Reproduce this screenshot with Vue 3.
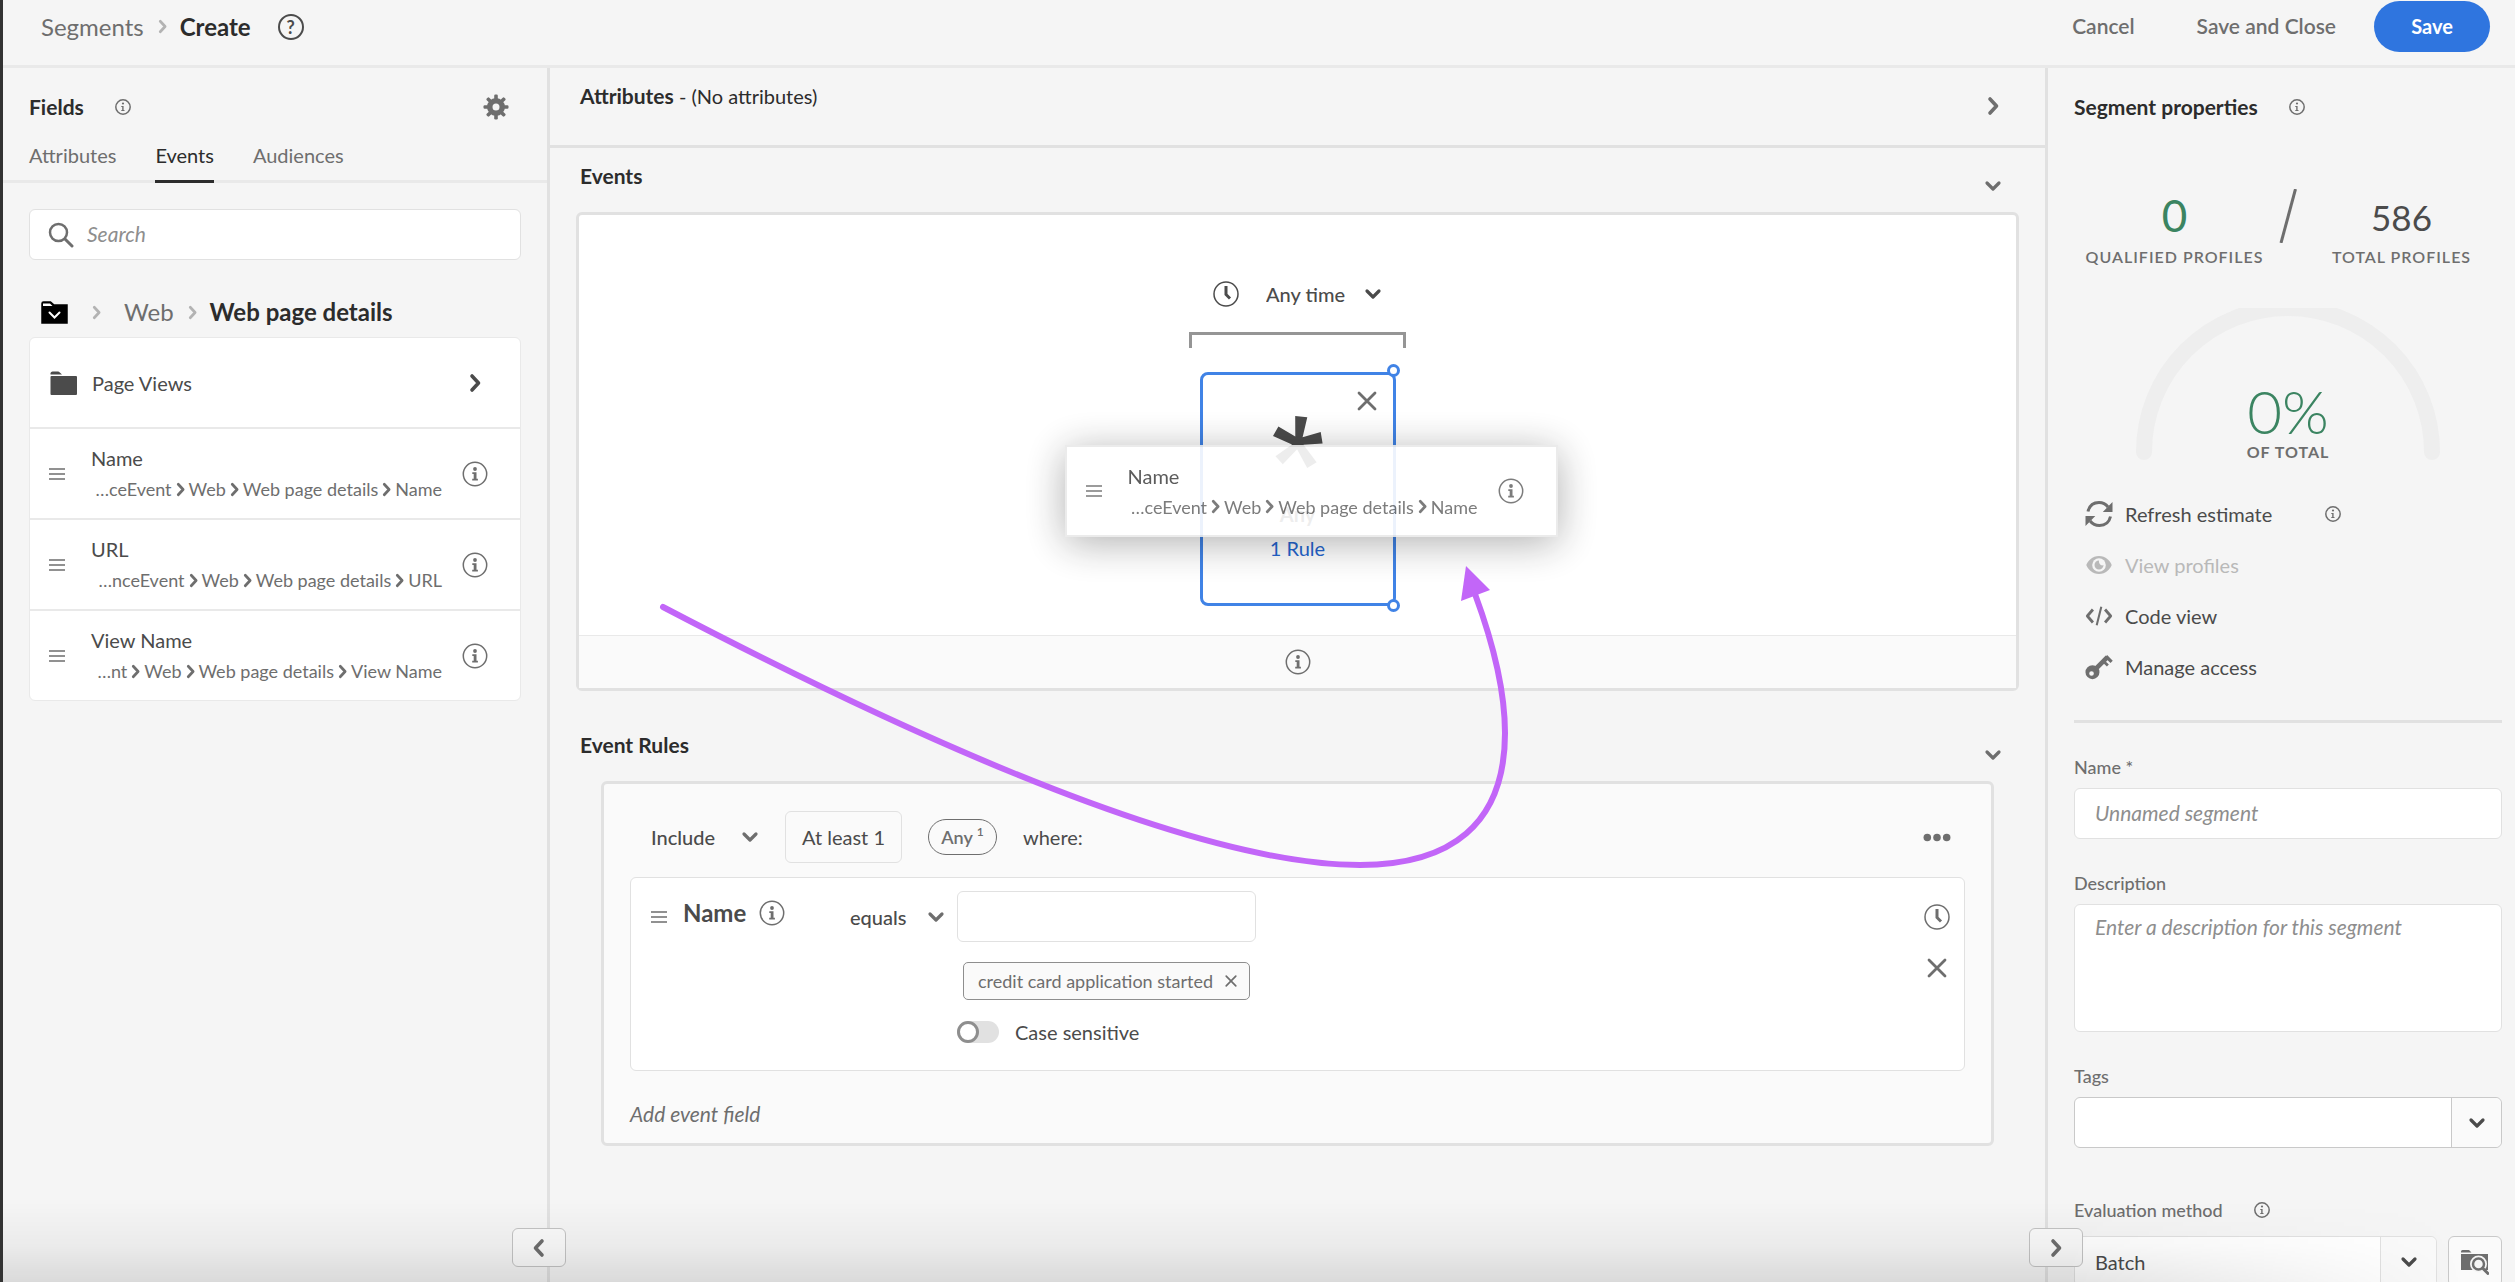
<script setup>
import { ref } from 'vue'

const tabs = ['Attributes', 'Events', 'Audiences']
const activeTab = ref('Events')

const fields = [
  { name: 'Name', path: ['…ceEvent', 'Web', 'Web page details', 'Name'] },
  { name: 'URL', path: ['…nceEvent', 'Web', 'Web page details', 'URL'] },
  { name: 'View Name', path: ['…nt', 'Web', 'Web page details', 'View Name'] },
]
const dragged = fields[0]

const actions = [
  { icon: 'refresh', label: 'Refresh estimate', info: true },
  { icon: 'eye', label: 'View profiles', disabled: true },
  { icon: 'code', label: 'Code view' },
  { icon: 'key', label: 'Manage access' },
]

const caseSensitive = ref(false)
</script>

<template>
  <div class="app">
    <svg class="sprite" aria-hidden="true">
      <symbol id="chev-right" viewBox="0 0 12 20">
        <path d="M3 3l6.500 7L3 17" fill="none" stroke="currentColor" stroke-width="3.600" stroke-linecap="round" stroke-linejoin="round" />
      </symbol>
      <symbol id="chev-left" viewBox="0 0 12 20">
        <path d="M9 3l-6.500 7L9 17" fill="none" stroke="currentColor" stroke-width="3.600" stroke-linecap="round" stroke-linejoin="round" />
      </symbol>
      <symbol id="chev-down" viewBox="0 0 18 12">
        <path d="M3 3l6 6 6-6" fill="none" stroke="currentColor" stroke-width="3.200" stroke-linecap="round" stroke-linejoin="round" />
      </symbol>
      <symbol id="info" viewBox="0 0 26 26">
        <circle cx="13" cy="13" r="11.700" fill="none" stroke="currentColor" stroke-width="1.500" />
        <circle cx="13" cy="8" r="1.900" fill="currentColor" />
        <path d="M10.300 11.300h4.200v6.500h1.400v1.700h-5.700v-1.700h1.500v-4.800h-1.400z" fill="currentColor" />
      </symbol>
      <symbol id="info-small" viewBox="0 0 18 18">
        <circle cx="9" cy="9" r="7.200" fill="none" stroke="currentColor" stroke-width="1.500" />
        <circle cx="9" cy="5.500" r="1.100" fill="currentColor" />
        <path d="M7.300 7.900h2.300v4h.9v1H7.300v-1h.9V8.900h-.9z" fill="currentColor" />
      </symbol>
      <symbol id="gear" viewBox="0 0 26 26">
        <g fill="currentColor">
          <path fill-rule="evenodd" d="M13 4a9 9 0 100 18 9 9 0 000-18zm0 5.500a3.500 3.500 0 110 7 3.500 3.500 0 010-7z" />
          <rect v-for="n in 8" :key="n" x="11.200" y="0.500" width="3.600" height="5" rx="1.200" :transform="`rotate(${n * 45} 13 13)`" />
        </g>
      </symbol>
      <symbol id="search" viewBox="0 0 26 26">
        <circle cx="10.500" cy="10.500" r="8.500" fill="none" stroke="currentColor" stroke-width="2.500" />
        <path d="M17 17l7 7" stroke="currentColor" stroke-width="3" stroke-linecap="round" />
      </symbol>
      <symbol id="folder-nav" viewBox="0 0 27 23">
        <path d="M1 22V2.500Q1 1 2.500 1h7L13 4h13v18z" fill="#000" stroke="#000" stroke-width="1.500" />
        <path d="M2 5V2.500h7L11.500 5z" fill="#fff" />
        <path d="M8.500 11.500l5 5 5-5" fill="none" stroke="#fff" stroke-width="2" stroke-linecap="round" />
      </symbol>
      <symbol id="folder" viewBox="0 0 27 24">
        <path d="M.500 3.500V2Q1 .5 2.500.5H8q1 0 1.800.9L12 3.500zM1.500 5h24.500q1 0 1 1v17q0 1-1 1H1.500q-1 0-1-1V6q0-1 1-1z" fill="currentColor" />
      </symbol>
      <symbol id="handle" viewBox="0 0 16 14">
        <path d="M0 2h16M0 7h16M0 12h16" stroke="currentColor" stroke-width="1.600" />
      </symbol>
      <symbol id="clock" viewBox="0 0 26 26">
        <circle cx="13" cy="13" r="12" fill="none" stroke="currentColor" stroke-width="1.500" />
        <path d="M13 5v8.500l4 4" fill="none" stroke="currentColor" stroke-width="3" />
      </symbol>
      <symbol id="cross" viewBox="0 0 20 20">
        <path d="M2 2l16 16M18 2L2 18" stroke="currentColor" stroke-width="2.800" stroke-linecap="round" />
      </symbol>
      <symbol id="asterisk" viewBox="0 0 50 52">
        <path d="M22.200 0L34.300 1.200 29.600 21.300 47.700 16 49.600 27.500 30.500 28.700 43.600 46.300 34.200 52 24.100 33.300 9.800 48.300 2.500 40.300 19 28.500 0 20 5.400 10.500 22.300 20.600z" fill="currentColor" />
      </symbol>
      <symbol id="dots" viewBox="0 0 26 8">
        <g fill="currentColor"><circle cx="4" cy="4" r="3.500" /><circle cx="13" cy="4" r="3.500" /><circle cx="22" cy="4" r="3.500" /></g>
      </symbol>
      <symbol id="refresh" viewBox="0 0 28 28">
        <path d="M3 11.500C4.500 5 9 2.500 14 2.500c4 0 7 1.800 9 4.500M25.500 16.500C24 23 19.500 25.500 14.500 25.500c-4 0-7.300-1.800-9.300-4.500" fill="none" stroke="currentColor" stroke-width="3" />
        <path d="M27.500 2v10H17.800zM.5 26V16h9.800z" fill="currentColor" />
      </symbol>
      <symbol id="eye" viewBox="0 0 28 28">
        <path d="M14 5C7.500 5 2.500 10 1.300 14c1.200 4 6.200 9 12.700 9s11.500-5 12.700-9C25.500 10 20.500 5 14 5z" fill="currentColor" />
        <circle cx="14" cy="14" r="6.800" fill="#f5f5f5" />
        <path d="M14 9.500a4.500 4.500 0 104.500 4.500c-2 1.300-5-.8-4.500-4.500z" fill="currentColor" />
      </symbol>
      <symbol id="code" viewBox="0 0 30 22">
        <path d="M8.500 4L2.500 11l6 7M21.500 4l6 7-6 7" fill="none" stroke="currentColor" stroke-width="3" stroke-linejoin="round" />
        <path d="M17.500 1L12.500 21" stroke="currentColor" stroke-width="2.200" />
      </symbol>
      <symbol id="key" viewBox="0 0 30 28">
        <path fill-rule="evenodd" d="M8 12a7.500 7.500 0 100 15 7.500 7.500 0 000-15zM7 18.500a2.500 2.500 0 110 5 2.500 2.500 0 010-5z" fill="currentColor" />
        <path d="M11 16.500L24 3.500" stroke="currentColor" stroke-width="5" />
        <path d="M22.500 2.500l6 6" stroke="currentColor" stroke-width="3.500" />
        <path d="M19.500 7.500l5 5" stroke="currentColor" stroke-width="3" />
      </symbol>
      <symbol id="folder-search" viewBox="0 0 28 26">
        <path d="M0 2.500Q0 1 1.500 1H8l2.500 2.500H0zM0 5h27v16H0z" fill="currentColor" />
        <circle cx="17.500" cy="15" r="8.500" fill="#f5f5f5" />
        <circle cx="17.500" cy="15" r="5.500" fill="#f5f5f5" stroke="currentColor" stroke-width="2.500" />
        <path d="M22 19.500l5 5" stroke="currentColor" stroke-width="3" stroke-linecap="round" />
      </symbol>
    </svg>

    <header class="topbar">
      <nav class="crumbs" aria-label="Breadcrumb">
        <a href="#segments">Segments</a>
        <svg class="crumb-sep"><use href="#chev-right" /></svg>
        <strong>Create</strong>
      </nav>
      <button class="help" aria-label="Help">?</button>
      <div class="top-actions">
        <button class="quiet">Cancel</button>
        <button class="quiet">Save and Close</button>
        <button class="save">Save</button>
      </div>
    </header>

    <div class="body">
      <aside class="fields">
        <div class="fields-head">
          <h2>Fields</h2>
          <svg class="i18"><use href="#info-small" /></svg>
          <button class="gear" aria-label="Settings"><svg class="i26"><use href="#gear" /></svg></button>
        </div>
        <nav class="tabs">
          <button v-for="t in tabs" :key="t" :class="{ active: t === activeTab }" @click="activeTab = t">{{ t }}</button>
        </nav>
        <label class="search">
          <svg class="i26"><use href="#search" /></svg>
          <input type="search" placeholder="Search" aria-label="Search" />
        </label>
        <nav class="folder-path" aria-label="Folder">
          <svg class="root"><use href="#folder-nav" /></svg>
          <svg class="crumb-sep first"><use href="#chev-right" /></svg>
          <a href="#web">Web</a>
          <svg class="crumb-sep"><use href="#chev-right" /></svg>
          <strong>Web page details</strong>
        </nav>
        <ul class="list">
          <li class="row folder-row">
            <svg class="folder"><use href="#folder" /></svg>
            <span class="row-name">Page Views</span>
            <svg class="chev-r"><use href="#chev-right" /></svg>
          </li>
          <li v-for="f in fields" :key="f.name" class="row">
            <svg class="handle"><use href="#handle" /></svg>
            <div class="row-text">
              <span class="row-name">{{ f.name }}</span>
              <span class="path">
                <template v-for="(p, i) in f.path" :key="i">
                  <svg v-if="i" class="path-sep"><use href="#chev-right" /></svg><span>{{ p }}</span>
                </template>
              </span>
            </div>
            <svg class="i26"><use href="#info" /></svg>
          </li>
        </ul>
        <button class="collapse left" aria-label="Collapse fields"><svg class="chev-r"><use href="#chev-left" /></svg></button>
      </aside>

      <main class="canvas">
        <section class="attributes">
          <div class="head">
            <h2>Attributes <span>- (No attributes)</span></h2>
            <button class="toggle" aria-label="Expand attributes"><svg class="chev-r"><use href="#chev-right" /></svg></button>
          </div>
        </section>

        <section class="events">
          <div class="head">
            <h2>Events</h2>
            <button class="toggle" aria-label="Collapse events"><svg class="chev-d"><use href="#chev-down" /></svg></button>
          </div>
          <div class="events-box">
            <div class="stage">
              <div class="timing">
                <svg class="i26"><use href="#clock" /></svg>
                <label class="pick">
                  <select aria-label="Time range"><option>Any time</option></select>
                  <svg class="chev-d"><use href="#chev-down" /></svg>
                </label>
              </div>
              <div class="bracket"></div>
              <article class="event-card">
                <i class="knob top"></i>
                <i class="knob bottom"></i>
                <button class="close" aria-label="Remove event"><svg class="i20"><use href="#cross" /></svg></button>
                <svg class="asterisk"><use href="#asterisk" /></svg>
                <strong>Any</strong>
                <a href="#rules">1 Rule</a>
              </article>
              <div class="row ghost">
                <svg class="handle"><use href="#handle" /></svg>
                <div class="row-text">
                  <span class="row-name">{{ dragged.name }}</span>
                  <span class="path">
                    <template v-for="(p, i) in dragged.path" :key="i">
                      <svg v-if="i" class="path-sep"><use href="#chev-right" /></svg><span>{{ p }}</span>
                    </template>
                  </span>
                </div>
                <svg class="i26"><use href="#info" /></svg>
              </div>
            </div>
            <div class="stage-foot"><svg class="i26"><use href="#info" /></svg></div>
          </div>
        </section>

        <section class="rules">
          <div class="head">
            <h2>Event Rules</h2>
            <button class="toggle" aria-label="Collapse rules"><svg class="chev-d"><use href="#chev-down" /></svg></button>
          </div>
          <div class="rules-box">
            <div class="rule-line">
              <label class="pick include">
                <select aria-label="Include or exclude"><option>Include</option></select>
                <svg class="chev-d"><use href="#chev-down" /></svg>
              </label>
              <button class="count">At least 1</button>
              <span class="pill">Any <sup>1</sup></span>
              <span>where:</span>
              <button class="more" aria-label="More"><svg class="dots"><use href="#dots" /></svg></button>
            </div>
            <div class="rule-card">
              <div class="rule-subject">
                <svg class="handle"><use href="#handle" /></svg>
                <div class="rule-name">
                  <strong>Name</strong>
                  <svg class="i26"><use href="#info" /></svg>
                </div>
                <label class="pick operator">
                  <select aria-label="Operator"><option>equals</option></select>
                  <svg class="chev-d"><use href="#chev-down" /></svg>
                </label>
              </div>
              <div class="values">
                <input class="box" type="text" aria-label="Value" />
                <span class="tag">credit card application started
                  <button aria-label="Remove value"><svg class="i12"><use href="#cross" /></svg></button>
                </span>
                <label class="switch">
                  <input v-model="caseSensitive" type="checkbox" />
                  <span>Case sensitive</span>
                </label>
              </div>
              <div class="rule-tools">
                <button aria-label="Time constraint"><svg class="i26"><use href="#clock" /></svg></button>
                <button aria-label="Remove rule"><svg class="i20"><use href="#cross" /></svg></button>
              </div>
            </div>
            <button class="add">Add event field</button>
          </div>
        </section>

        <svg class="arrow" viewBox="0 0 860 320" aria-hidden="true">
          <path d="M12 49C249 173 539 307 709 307C799 307 854 267 854 175C854 132 841 82 824 36" fill="none" stroke="#c266f8" stroke-width="6" stroke-linecap="round" />
          <path d="M815 8L839 32 810 43z" fill="#c266f8" />
        </svg>
      </main>

      <aside class="props">
        <div class="props-head">
          <h2>Segment properties</h2>
          <svg class="i18"><use href="#info-small" /></svg>
        </div>
        <div class="stats">
          <div class="stat"><b class="qualified">0</b><span>QUALIFIED PROFILES</span></div>
          <svg class="slash" viewBox="0 0 18 54"><path d="M2 54L16.500 0" stroke="#6e6e6e" stroke-width="3" /></svg>
          <div class="stat"><b class="total">586</b><span>TOTAL PROFILES</span></div>
        </div>
        <div class="gauge">
          <svg viewBox="0 0 304 152"><path d="M8 144A144 144 0 01296 144" fill="none" stroke="#eeeeee" stroke-width="16" stroke-linecap="round" /></svg>
          <div class="gauge-text"><b>0%</b><span>OF TOTAL</span></div>
        </div>
        <div class="actions">
          <button v-for="a in actions" :key="a.icon" :disabled="a.disabled">
            <svg class="i28"><use :href="`#${a.icon}`" /></svg>
            <span>{{ a.label }}</span>
            <svg v-if="a.info" class="i18"><use href="#info-small" /></svg>
          </button>
        </div>
        <hr />
        <div class="field">
          <label for="seg-name">Name *</label>
          <input id="seg-name" class="box" type="text" placeholder="Unnamed segment" />
        </div>
        <div class="field">
          <label for="seg-desc">Description</label>
          <textarea id="seg-desc" class="box" placeholder="Enter a description for this segment"></textarea>
        </div>
        <div class="field">
          <label for="seg-tags">Tags</label>
          <div class="combo tags">
            <input id="seg-tags" type="text" />
            <button aria-label="Show tags"><svg class="chev-d"><use href="#chev-down" /></svg></button>
          </div>
        </div>
        <div class="field evaluation">
          <div class="label-row">
            <label for="seg-eval">Evaluation method</label>
            <svg class="i18"><use href="#info-small" /></svg>
          </div>
          <div class="eval-row">
            <div class="combo">
              <select id="seg-eval"><option>Batch</option></select>
              <span class="combo-arrow"><svg class="chev-d"><use href="#chev-down" /></svg></span>
            </div>
            <button class="browse" aria-label="Browse"><svg class="i28"><use href="#folder-search" /></svg></button>
          </div>
        </div>
        <button class="collapse right" aria-label="Collapse properties"><svg class="chev-r"><use href="#chev-right" /></svg></button>
      </aside>
    </div>
    <div class="fade"></div>
  </div>
</template>

<style>
body {
  margin: 0;
  background: #f5f5f5;
}
</style>

<style scoped>
.app,
.app *,
.app *::before {
  box-sizing: border-box;
}
.app {
  position: relative;
  display: flex;
  flex-direction: column;
  height: 100vh;
  overflow: hidden;
  border-left: 3px solid #333;
  background: #f5f5f5;
  color: #4b4b4b;
  font: 20px/24px Lato, "Open Sans", sans-serif;
}
.sprite {
  position: absolute;
  width: 0;
  height: 0;
}
svg {
  display: block;
  flex: none;
  color: #6e6e6e;
}
button {
  padding: 0;
  border: 0;
  background: none;
  color: inherit;
  font: inherit;
  cursor: pointer;
}
a {
  color: inherit;
  text-decoration: none;
}
h2 {
  margin: 0;
  color: #2c2c2c;
  font-size: 21px;
  font-weight: 700;
}
input,
select,
textarea {
  margin: 0;
  border: 0;
  outline: 0;
  background: none;
  color: #4b4b4b;
  font: inherit;
  appearance: none;
}
select {
  padding: 0;
}
input,
textarea {
  font-size: 21px;
}
::placeholder {
  color: #8e8e8e;
  font-style: italic;
  opacity: 1;
}
.i12 { width: 12px; height: 12px; }
.i18 { width: 18px; height: 18px; }
.i20 { width: 20px; height: 20px; }
.i26 { width: 26px; height: 26px; }
.i28 { width: 28px; height: 28px; }
.chev-r { width: 12px; height: 20px; }
.chev-d { width: 18px; height: 12px; }
.handle { width: 16px; height: 14px; }

/* top bar */
.topbar {
  display: flex;
  flex: none;
  align-items: center;
  height: 68px;
  padding: 1px 25px 13px 38px;
  border-bottom: 3px solid #e9e9e9;
}
.crumbs,
.folder-path {
  display: flex;
  align-items: center;
  color: #6e6e6e;
  font-size: 24px;
  line-height: 28px;
}
.crumbs strong,
.folder-path strong {
  color: #2c2c2c;
}
.crumb-sep {
  width: 9px;
  height: 15px;
  margin: 0 13px 0 14px;
  color: #b3b3b3;
}
.help {
  width: 26px;
  height: 26px;
  margin-left: 27px;
  border: 2px solid #4b4b4b;
  border-radius: 50%;
  font-size: 18px;
  font-weight: 700;
  line-height: 22px;
}
.top-actions {
  display: flex;
  align-items: center;
  margin-left: auto;
}
.quiet {
  padding: 0 31px 2px;
  color: #6e6e6e;
  font-size: 21px;
  font-weight: 600;
}
.save {
  width: 116px;
  height: 51px;
  margin-left: 7px;
  padding-bottom: 2px;
  border-radius: 26px;
  background: #2f75df;
  color: #fff;
  font-weight: 700;
}

.body {
  display: grid;
  flex: 1;
  grid-template-columns: 547px minmax(0, 1fr) 470px;
  min-height: 0;
}

/* fields panel */
.fields {
  position: relative;
  z-index: 1;
  padding-top: 27px;
  border-right: 3px solid #e1e1e1;
}
.fields-head,
.props-head {
  display: flex;
  align-items: center;
  height: 24px;
}
.fields-head {
  padding: 0 38px 0 26px;
}
.fields-head .i18,
.props-head .i18 {
  margin-left: 30px;
}
.gear {
  margin-left: auto;
}
.tabs {
  display: flex;
  gap: 39px;
  margin-top: 24px;
  padding-left: 26px;
  border-bottom: 3px solid #e9e9e9;
}
.tabs button {
  margin-bottom: -3px;
  padding-bottom: 13px;
  border-bottom: 3px solid transparent;
  color: #6e6e6e;
}
.tabs .active {
  border-color: #2c2c2c;
  color: #2c2c2c;
}
.search {
  display: flex;
  align-items: center;
  gap: 13px;
  height: 51px;
  margin: 26px 26px 0;
  padding-left: 18px;
  border: 1px solid #e1e1e1;
  border-radius: 6px;
  background: #fff;
}
.search input {
  flex: 1;
  padding: 0 0 2px;
}
.folder-path {
  margin: 38px 0 0 38px;
}
.root {
  width: 27px;
  height: 23px;
}
.crumb-sep.first {
  margin: 0 23px 0 24px;
}
.list {
  margin: 11px 26px 0;
  padding: 0;
  border: 1px solid #e9e9e9;
  border-radius: 6px;
  background: #fff;
  list-style: none;
}
.row {
  display: flex;
  align-items: center;
  height: 91px;
  padding: 0 32px 0 19px;
  border-top: 2px solid #e9e9e9;
}
.folder-row {
  height: 89px;
  padding-right: 39px;
  border-top: 0;
}
.folder-row .chev-r {
  margin-left: auto;
  color: #4b4b4b;
}
.folder {
  width: 27px;
  height: 24px;
  margin: 0 15px 0 1px;
  color: #4b4b4b;
}
.row-text {
  display: flex;
  flex: 1;
  flex-direction: column;
  gap: 7px;
  margin: 0 20px 0 26px;
}
.path {
  display: flex;
  align-items: center;
  justify-content: flex-end;
  gap: 4px;
  color: #6e6e6e;
  font-size: 18px;
  white-space: nowrap;
}
.path-sep {
  width: 9px;
  height: 15px;
}
.collapse {
  position: absolute;
  bottom: 15px;
  display: grid;
  place-items: center;
  width: 54px;
  height: 39px;
  border: 1px solid #c4c4c4;
  border-radius: 6px;
  background: #fafafa;
}
.collapse.left {
  right: -19px;
}
.collapse.right {
  left: -19px;
}

/* canvas */
.canvas {
  position: relative;
}
.head {
  display: flex;
  align-items: flex-start;
  justify-content: space-between;
  height: 64px;
  padding: 16px 39px 0 30px;
}
.head h2 span {
  font-size: 20px;
  font-weight: 400;
}
.toggle {
  display: grid;
  place-items: center;
  width: 26px;
  height: 24px;
  margin-top: 10px;
}
.attributes {
  height: 80px;
  border-bottom: 3px solid #e1e1e1;
}
.events-box {
  margin: 0 26px;
  border: 3px solid #e1e1e1;
  border-radius: 6px;
  background: #fff;
}
.stage {
  position: relative;
  display: flex;
  flex-direction: column;
  align-items: center;
  height: 420px;
  padding-top: 63px;
}
.timing {
  display: flex;
  align-items: center;
  gap: 27px;
  height: 32px;
}
.timing svg {
  color: #4b4b4b;
}
.timing .pick {
  gap: 18px;
}
.pick {
  display: flex;
  align-items: center;
  justify-content: space-between;
}
.pick select {
  font-weight: 500;
}
.bracket {
  width: 217px;
  height: 16px;
  margin-top: 22px;
  border: 3px solid #959595;
  border-bottom: 0;
}
.event-card {
  position: relative;
  display: flex;
  flex-direction: column;
  align-items: center;
  width: 196px;
  height: 234px;
  margin-top: 24px;
  padding-top: 41px;
  border: 3px solid #4083e6;
  border-radius: 8px;
}
.event-card strong {
  margin-top: 34px;
}
.event-card a {
  margin-top: 10px;
  color: #2465cf;
}
.asterisk {
  width: 50px;
  height: 52px;
  color: #4b4b4b;
}
.close {
  position: absolute;
  top: 16px;
  right: 16px;
}
.knob {
  position: absolute;
  right: -7px;
  width: 13px;
  height: 13px;
  border: 3px solid #4083e6;
  border-radius: 50%;
  background: #fff;
}
.knob.top {
  top: -11px;
}
.knob.bottom {
  bottom: -9px;
}
.ghost {
  position: absolute;
  top: 230px;
  left: 50%;
  width: 493px;
  height: 92px;
  margin-left: -233px;
  border: 2px solid #e9e9e9;
  background: #fff;
  box-shadow: 0 6px 40px rgba(0, 0, 0, 0.35);
  opacity: 0.9;
}
.stage-foot {
  display: grid;
  place-items: center;
  height: 53px;
  border-top: 1px solid #e9e9e9;
  background: #fafafa;
}
.rules .head {
  height: 90px;
  padding-top: 42px;
}
.rules-box {
  margin: 0 51px;
  padding: 27px 26px 17px;
  border: 3px solid #e1e1e1;
  border-radius: 6px;
  background: #fafafa;
}
.rule-line {
  display: flex;
  align-items: center;
  gap: 26px;
  padding: 0 14px 0 21px;
}
.include {
  width: 108px;
}
.count {
  width: 117px;
  height: 52px;
  border: 1px solid #e1e1e1;
  border-radius: 6px;
}
.pill {
  width: 69px;
  height: 36px;
  border: 1px solid #6e6e6e;
  border-radius: 18px;
  color: #6e6e6e;
  font-size: 18px;
  font-weight: 600;
  line-height: 34px;
  text-align: center;
}
.pill sup {
  font-size: 12px;
  line-height: 12px;
  vertical-align: 8px;
}
.more {
  margin-left: auto;
}
.dots {
  width: 28px;
  height: 9px;
}
.rule-card {
  display: flex;
  align-items: flex-start;
  margin-top: 14px;
  padding: 13px 14px 26px 20px;
  border: 1px solid #e1e1e1;
  border-radius: 6px;
  background: #fff;
}
.rule-subject {
  display: flex;
  align-items: center;
  height: 52px;
}
.rule-name {
  display: flex;
  align-items: center;
  gap: 13px;
  width: 167px;
  margin-left: 16px;
  padding-bottom: 8px;
  font-size: 24px;
}
.operator {
  width: 95px;
  margin-right: 12px;
}
.values {
  display: flex;
  flex-direction: column;
  align-items: flex-start;
  width: 299px;
}
.box {
  width: 100%;
  height: 51px;
  padding: 0 20px 3px;
  border: 1px solid #e1e1e1;
  border-radius: 6px;
  background: #fff;
}
.tag {
  display: flex;
  align-items: center;
  gap: 12px;
  height: 38px;
  margin: 20px 0 0 6px;
  padding: 0 12px 0 14px;
  border: 1px solid #8e8e8e;
  border-radius: 5px;
  background: #fafafa;
  color: #6e6e6e;
  font-size: 18px;
  white-space: nowrap;
}
.switch {
  display: flex;
  align-items: center;
  gap: 16px;
  margin-top: 20px;
}
.switch input {
  width: 42px;
  height: 22px;
  border-radius: 11px;
  background: #e1e1e1;
}
.switch input::before {
  content: "";
  display: block;
  width: 22px;
  height: 22px;
  border: 3px solid #8e8e8e;
  border-radius: 50%;
  background: #fff;
}
.switch input:checked::before {
  margin-left: 20px;
}
.rule-tools {
  display: flex;
  flex-direction: column;
  align-items: center;
  gap: 28px;
  margin: 13px 0 0 auto;
}
.add {
  display: block;
  margin-top: 31px;
  color: #6e6e6e;
  font-size: 21px;
  font-style: italic;
}
.arrow {
  position: absolute;
  top: 490px;
  left: calc(50% - 647px);
  width: 860px;
  height: 320px;
  pointer-events: none;
}

/* segment properties */
.props {
  position: relative;
  z-index: 1;
  min-height: 0;
  padding: 27px 13px 0 26px;
  border-left: 3px solid #e1e1e1;
}
.stats {
  display: grid;
  grid-template-columns: 201px 18px 1fr;
  column-gap: 4px;
  margin-top: 70px;
}
.slash {
  width: 18px;
  height: 54px;
}
.stat {
  display: flex;
  flex-direction: column;
  align-items: center;
  padding-top: 2px;
}
.stat b {
  font-weight: 400;
}
.qualified {
  color: #3b8461;
  font-size: 44px;
  line-height: 48px;
}
.total {
  padding-top: 4px;
  font-size: 35px;
  line-height: 44px;
}
.stat span,
.gauge-text span {
  margin-top: 8px;
  color: #6e6e6e;
  font-size: 16px;
  font-weight: 600;
  letter-spacing: 1px;
  line-height: 20px;
}
.gauge {
  position: relative;
  width: 304px;
  height: 152px;
  margin: 41px auto 0;
}
.gauge > svg {
  width: 304px;
  height: 152px;
}
.gauge-text {
  position: absolute;
  inset: 72px 0 auto;
  display: flex;
  flex-direction: column;
  align-items: center;
}
.gauge-text b {
  color: #3b8461;
  font-size: 60px;
  font-weight: 300;
  line-height: 62px;
}
.gauge-text span {
  margin-top: 0;
  font-weight: 700;
}
.actions {
  display: grid;
  gap: 3px;
  margin-top: 30px;
}
.actions button {
  display: flex;
  align-items: center;
  gap: 12px;
  height: 48px;
  padding-left: 11px;
}
.actions .i18 {
  margin-left: 40px;
}
.actions button:disabled,
.actions button:disabled svg {
  color: #b9b9b9;
}
hr {
  height: 3px;
  margin: 29px 0 0;
  border: 0;
  background: #e1e1e1;
}
.field {
  display: flex;
  flex-direction: column;
  gap: 9px;
  margin-top: 32px;
}
.field label {
  color: #6e6e6e;
  font-size: 18px;
  font-weight: 500;
}
textarea.box {
  display: block;
  height: 128px;
  padding: 10px 20px;
  resize: none;
}
.combo {
  display: flex;
  flex: 1;
  height: 51px;
  border: 1px solid #e1e1e1;
  border-radius: 6px;
  background: #fff;
}
.combo input,
.combo select {
  flex: 1;
  min-width: 0;
  padding: 0 20px;
}
.combo button,
.combo-arrow {
  display: grid;
  place-items: center;
  width: 56px;
  border-left: 1px solid #e1e1e1;
  border-radius: 0 6px 6px 0;
  background: #fafafa;
}
.combo svg {
  color: #4b4b4b;
}
.tags,
.tags button {
  border-color: #c9c9c9;
}
.tags {
  flex: none;
}
.tags button {
  width: 50px;
}
.evaluation {
  gap: 14px;
  margin-top: 50px;
}
.label-row {
  display: flex;
  align-items: center;
  gap: 30px;
}
.eval-row {
  display: flex;
  gap: 11px;
}
.browse {
  display: grid;
  place-items: center;
  width: 54px;
  height: 51px;
  border: 1px solid #c9c9c9;
  border-radius: 6px;
  background: #fafafa;
}
.fade {
  position: absolute;
  inset: auto 0 0;
  z-index: 2;
  height: 80px;
  background: linear-gradient(rgba(0, 0, 0, 0), rgba(0, 0, 0, 0.04) 55%, rgba(0, 0, 0, 0.11));
  mask-image: linear-gradient(90deg, #000 82%, transparent 98%);
  pointer-events: none;
}
</style>
